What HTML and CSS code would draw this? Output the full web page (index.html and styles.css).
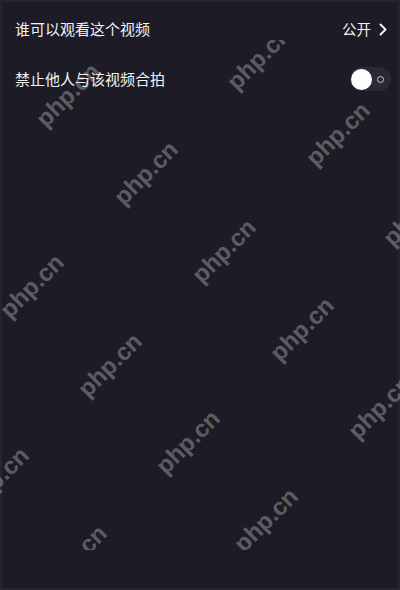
FILE: index.html
```html
<!DOCTYPE html>
<html lang="zh-CN">
<head>
<meta charset="utf-8">
<title>隐私设置</title>
<link rel="stylesheet" href="styles.css">
</head>
<body>
<div class="page">
  <div class="settings">
    <div class="row">
      <span class="label">谁可以观看这个视频</span>
      <span class="value">公开
        <svg class="chevron" width="8" height="13" viewBox="0 0 8 13"><path d="M1.5 1.5 L6.5 6.5 L1.5 11.5" fill="none" stroke="#f2f2f2" stroke-width="2" stroke-linecap="round" stroke-linejoin="round"/></svg>
      </span>
    </div>
    <div class="row">
      <span class="label">禁止他人与该视频合拍</span>
      <span class="toggle"><span class="knob"></span><span class="off-ring"></span></span>
    </div>
  </div>
  <div class="watermarks">
    <span class="wm wm-a">php.cn</span>
    <span class="wm wm-b">php.cn</span>
    <span class="wm wm-c">php.cn</span>
    <span class="wm wm-d">php.cn</span>
    <span class="wm wm-e">php.cn</span>
    <span class="wm wm-f">php.cn</span>
    <span class="wm wm-g">php.cn</span>
    <span class="wm wm-h">php.cn</span>
    <span class="wm wm-i">php.cn</span>
    <span class="wm wm-j">php.cn</span>
    <span class="wm wm-k">php.cn</span>
    <span class="wm wm-l">php.cn</span>
    <span class="wm wm-m">php.cn</span>
    <span class="wm wm-n">php.cn</span>
  </div>
</div>
</body>
</html>
```
FILE: styles.css
```css
html, body {
  margin: 0;
  padding: 0;
  background: #1d1c26;
}

.page {
  position: relative;
  width: 400px;
  height: 590px;
  overflow: hidden;
  background: #1d1c26;
  box-shadow: inset 0 0 0 2px #26252f;
  font-family: "Noto Sans CJK SC", "Noto Sans", sans-serif;
  color: #f2f2f2;
}

.settings {
  position: relative;
  z-index: 2;
  padding-top: 4px;
}

.row {
  height: 50px;
  display: flex;
  align-items: center;
  justify-content: space-between;
  padding: 0 13px 0 15px;
}

.label {
  font-size: 15px;
  line-height: 20px;
}

.value {
  display: flex;
  align-items: center;
  gap: 8px;
  font-size: 14.5px;
  line-height: 20px;
}

.chevron {
  display: block;
}

.toggle {
  position: relative;
  width: 41px;
  height: 24px;
  margin-right: -4px;
  border-radius: 12px;
  background: #2b2a34;
}

.knob {
  position: absolute;
  left: 1px;
  top: 1.5px;
  width: 21px;
  height: 21px;
  border-radius: 50%;
  background: #ffffff;
}

.off-ring {
  position: absolute;
  left: 27px;
  top: 8.5px;
  width: 5px;
  height: 5px;
  border-radius: 50%;
  border: 1.5px solid #c9c9cc;
}

/* diagonal site stamp laid over the page */
.watermarks {
  position: absolute;
  left: 0;
  right: 0;
  top: 40px;
  bottom: 40px;
  overflow: hidden;
  z-index: 1;
  pointer-events: none;
}

.wm {
  position: absolute;
  font-family: "Liberation Sans", Arial, sans-serif;
  font-weight: bold;
  font-size: 24px;
  line-height: 24px;
  color: rgba(255, 255, 255, 0.3);
  white-space: nowrap;
  transform: translate(-50%, -50%) rotate(-45deg);
}

/* centres, relative to the stamp layer (page y minus 40) */
.wm-a { left: 68px;  top: 55px; }
.wm-b { left: 259px; top: 18px; }
.wm-c { left: 338px; top: 94px; }
.wm-d { left: 146px; top: 133px; }
.wm-e { left: 415px; top: 174px; }
.wm-f { left: 224px; top: 211px; }
.wm-g { left: 32px;  top: 246px; }
.wm-h { left: 302px; top: 289px; }
.wm-i { left: 110px; top: 325px; }
.wm-j { left: 380px; top: 367px; }
.wm-k { left: 188px; top: 402px; }
.wm-l { left: -3px;  top: 439px; }
.wm-m { left: 266px; top: 480px; }
.wm-n { left: 75px;  top: 517px; }
```
